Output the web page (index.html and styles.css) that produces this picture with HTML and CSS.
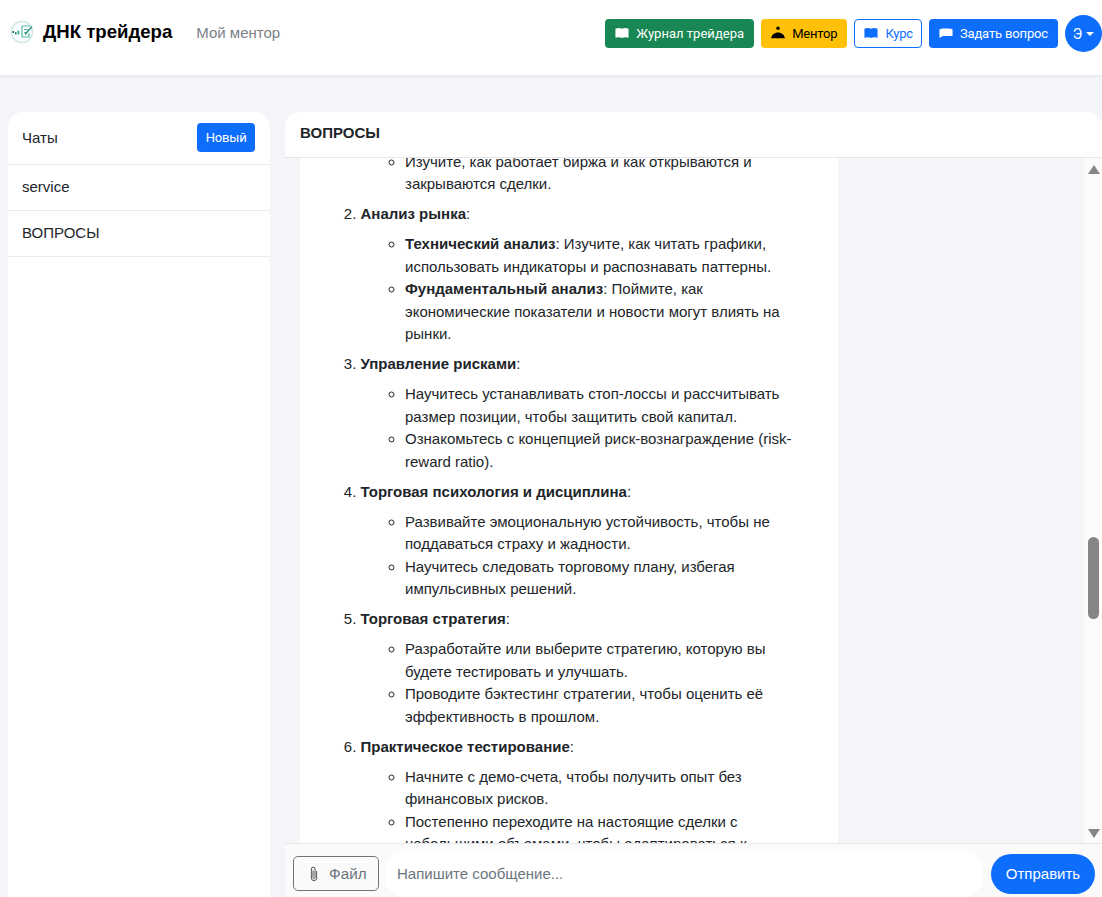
FILE: index.html
```html
<!DOCTYPE html>
<html lang="ru">
<head>
    <meta charset="UTF-8">
    <title>ДНК трейдера</title>
    <link rel="stylesheet" href="styles.css">
</head>
<body>
    <header class="topbar">
        <div class="brand">
            <svg class="logo" viewBox="0 0 24 24" width="24" height="24">
                <circle cx="12" cy="12" r="10.5" fill="#fff" stroke="#cfe9e6" stroke-width="1.5"></circle>
                <rect x="2.500" y="11" width="1.500" height="2" fill="#1c5f6a"></rect>
                <rect x="5" y="12" width="1.500" height="2.500" fill="#2a8a80"></rect>
                <rect x="7.500" y="10.500" width="1.800" height="4" fill="#35b58f"></rect>
                <path d="M12 6h8M12 6v11h7v-4M14 9.500h4M14 12.500h2" fill="none" stroke="#57b8a8" stroke-width="1.200"></path>
                <path d="M15 14.500l7-8" fill="none" stroke="#2a8a80" stroke-width="1.300"></path>
            </svg>
            <span class="brand-name">ДНК трейдера</span>
            <a class="brand-link">Мой ментор</a>
        </div>
        <nav class="actions">
            <a class="btn btn-green">
                <svg class="ico" viewBox="0 0 16 16"><path d="M.5 3C3 2 6 2 8 3.200 10 2 13 2 15.500 3v10.500c-2.500-.8-5.500-.8-7.500.3-2-1.100-5-1.100-7.500-.3z" fill="currentColor"></path></svg>
                Журнал трейдера
            </a>
            <a class="btn btn-yellow">
                <svg class="ico" viewBox="0 0 16 16"><circle cx="8" cy="2.500" r="2" fill="currentColor"></circle><path d="M0 14c1-4 4-6.500 8-6.500s7 2.500 8 6.500z" fill="currentColor"></path></svg>
                Ментор
            </a>
            <a class="btn btn-outline">
                <svg class="ico" viewBox="0 0 16 16"><path d="M.5 3C3 2 6 2 8 3.200 10 2 13 2 15.500 3v10.500c-2.500-.8-5.500-.8-7.500.3-2-1.100-5-1.100-7.500-.3z" fill="#0d6efd"></path></svg>
                Курс
            </a>
            <a class="btn btn-blue btn-ask">
                <svg class="ico" viewBox="0 0 16 16"><path d="M1.500 3.500C5 2.800 11 2.800 14.500 3.500a1 1 0 0 1 1 1v6a1 1 0 0 1-1 1H4.500L1 13.500a.5.500 0 0 1-.5-.5V4.500a1 1 0 0 1 1-1z" fill="currentColor"></path></svg>
                Задать вопрос
            </a>
            <a class="avatar">Э<span class="caret"></span></a>
        </nav>
    </header>

    <main class="layout">
        <aside class="sidebar">
            <div class="side-head">
                <span>Чаты</span>
                <a class="btn btn-blue btn-new">Новый</a>
            </div>
            <div class="side-item">service</div>
            <div class="side-item">ВОПРОСЫ</div>
        </aside>

        <section class="chat">
            <div class="chat-title">ВОПРОСЫ</div>
            <div class="messages">
                <div class="bubble">
                    <ol class="steps" start="1">
                        <li class="step-cut">
                            <ul>
                                <li>Изучите, как работает биржа и как открываются и закрываются сделки.</li>
                            </ul>
                        </li>
                        <li><strong>Анализ рынка</strong>:
                            <ul>
                                <li><strong>Технический анализ</strong>: Изучите, как читать графики, использовать индикаторы и распознавать паттерны.</li>
                                <li><strong>Фундаментальный анализ</strong>: Поймите, как экономические показатели и новости могут влиять на рынки.</li>
                            </ul>
                        </li>
                        <li><strong>Управление рисками</strong>:
                            <ul>
                                <li>Научитесь устанавливать стоп-лоссы и рассчитывать размер позиции, чтобы защитить свой капитал.</li>
                                <li>Ознакомьтесь с концепцией риск-вознаграждение (risk-reward ratio).</li>
                            </ul>
                        </li>
                        <li><strong>Торговая психология и дисциплина</strong>:
                            <ul>
                                <li>Развивайте эмоциональную устойчивость, чтобы не поддаваться страху и жадности.</li>
                                <li>Научитесь следовать торговому плану, избегая импульсивных решений.</li>
                            </ul>
                        </li>
                        <li><strong>Торговая стратегия</strong>:
                            <ul>
                                <li>Разработайте или выберите стратегию, которую вы будете тестировать и улучшать.</li>
                                <li>Проводите бэктестинг стратегии, чтобы оценить её эффективность в прошлом.</li>
                            </ul>
                        </li>
                        <li><strong>Практическое тестирование</strong>:
                            <ul>
                                <li>Начните с демо-счета, чтобы получить опыт без финансовых рисков.</li>
                                <li>Постепенно переходите на настоящие сделки с небольшими объемами, чтобы адаптироваться к реальным условиям.</li>
                            </ul>
                        </li>
                    </ol>
                </div>
                <div class="scrollbar">
                    <span class="arrow-up"></span>
                    <span class="thumb"></span>
                    <span class="arrow-down"></span>
                </div>
            </div>
            <form class="composer">
                <label class="file-btn">
                    <svg class="clip" viewBox="0 0 8 16" width="8" height="16"><path d="M3 4.500v7a1 1 0 0 0 2 0V3a1.800 1.800 0 0 0-3.600 0v9a2.600 2.600 0 0 0 5.200 0V5" fill="none" stroke="#555" stroke-width="1"></path></svg>
                    Файл
                </label>
                <input class="msg-input" type="text" placeholder="Напишите сообщение...">
                <button class="send" type="button">Отправить</button>
            </form>
        </section>
    </main>
</body>
</html>
```

FILE: styles.css
```css
* {
    box-sizing: border-box;
}

html, body {
    height: 100%;
}

body {
    margin: 0;
    overflow: hidden;
    font-family: "Liberation Sans", Arial, sans-serif;
    font-size: 15px;
    color: #212529;
    background-color: #f3f5f9;
}

/* верхняя панель */
.topbar {
    height: 75px;
    display: flex;
    justify-content: space-between;
    align-items: flex-start;
    padding: 15px 0 0 10px;
    background-color: #ffffff;
    box-shadow: 0 1px 4px rgba(0, 0, 0, 0.08);
}

.brand {
    display: flex;
    align-items: center;
    height: 34px;
}

.logo {
    margin-right: 9px;
}

.brand-name {
    font-size: 18.6px;
    font-weight: bold;
    color: #000000;
}

.brand-link {
    margin-left: 24px;
    font-size: 15px;
    color: #7b8087;
}

.actions {
    display: flex;
    align-items: center;
    gap: 7px;
    height: 37px;
}

.btn {
    display: flex;
    align-items: center;
    height: 29px;
    padding: 0 9px 1px;
    gap: 7px;
    font-family: Roboto, "Liberation Sans", sans-serif;
    font-size: 13px;
    font-weight: 450;
    border-radius: 4px;
    border: 1px solid transparent;
}

.ico {
    width: 14px;
    height: 14px;
    flex-shrink: 0;
}

.btn-green {
    background-color: #198754;
    color: #ffffff;
    letter-spacing: 0.03px;
}

.btn-yellow {
    background-color: #ffc107;
    color: #000000;
    letter-spacing: -0.2px;
}

.btn-outline {
    padding-right: 8px;
    border-color: #0d6efd;
    background-color: #ffffff;
    color: #0d6efd;
    font-weight: 400;
    letter-spacing: -0.2px;
}

.btn-blue {
    background-color: #0d6efd;
    color: #ffffff;
}

.btn-ask {
    letter-spacing: -0.15px;
}

.avatar {
    display: flex;
    align-items: center;
    justify-content: center;
    gap: 4px;
    width: 37px;
    height: 37px;
    border-radius: 50%;
    background-color: #0d6efd;
    color: #ffffff;
    font-family: Roboto, "Liberation Sans", sans-serif;
    font-size: 14px;
}

.caret {
    width: 0;
    height: 0;
    border-left: 4px solid transparent;
    border-right: 4px solid transparent;
    border-top: 4px solid #ffffff;
}

/* основная часть */
.layout {
    display: flex;
    gap: 15px;
    height: calc(100vh - 75px);
    padding: 37px 0 0 8px;
}

.sidebar {
    width: 262px;
    flex-shrink: 0;
    background-color: #ffffff;
    border-radius: 15px 15px 0 0;
}

.side-head {
    display: flex;
    justify-content: space-between;
    align-items: center;
    height: 53px;
    padding: 0 15px 2px 14px;
    border-bottom: 1px solid #e9ebee;
}

.btn-new {
    padding: 0 7.5px;
    letter-spacing: -0.2px;
}

.side-item {
    display: flex;
    align-items: center;
    height: 46px;
    padding: 0 0 2px 14px;
    border-bottom: 1px solid #e9ebee;
}

.chat {
    flex: 1;
    min-width: 0;
    display: flex;
    flex-direction: column;
}

.chat-title {
    height: 46px;
    padding: 12px 15px 0;
    flex-shrink: 0;
    font-size: 15px;
    font-weight: bold;
    background-color: #ffffff;
    border-radius: 15px 15px 0 0;
    border-bottom: 1px solid #e4e6ea;
}

.messages {
    position: relative;
    flex: 1;
    min-height: 0;
    overflow: hidden;
    padding-left: 15px;
}

.bubble {
    width: 538px;
    margin-top: -7.5px;
    padding: 0 45px 0 0;
    background-color: #ffffff;
    line-height: 22.5px;
}

.steps {
    margin: 0;
    padding-left: 60.5px;
}

.steps > li {
    margin-bottom: 7.5px;
}

.step-cut {
    list-style: none;
}

.steps ul {
    margin: 7.5px 0 0;
    padding-left: 44.5px;
    list-style-type: circle;
}

.step-cut ul {
    margin-top: 0;
}

/* полоса прокрутки */
.scrollbar {
    position: absolute;
    top: 0;
    right: 0;
    bottom: 0;
    width: 18px;
    background-color: #fbfbfb;
}

.arrow-up, .arrow-down, .thumb {
    position: absolute;
    left: 4px;
}

.arrow-up {
    top: 7px;
    border-left: 6px solid transparent;
    border-right: 6px solid transparent;
    border-bottom: 9px solid #858585;
}

.arrow-down {
    bottom: 5px;
    border-left: 6px solid transparent;
    border-right: 6px solid transparent;
    border-top: 9px solid #858585;
}

.thumb {
    top: 379px;
    width: 11px;
    height: 82px;
    border-radius: 6px;
    background-color: #858585;
}

/* поле сообщения */
.composer {
    display: flex;
    align-items: center;
    height: 54px;
    flex-shrink: 0;
    gap: 6px;
    padding: 6px 7px 0 8px;
    background-color: #fafafb;
    border-top: 1px solid #e4e6ea;
}

.file-btn {
    display: flex;
    align-items: center;
    gap: 11px;
    width: 86px;
    height: 35px;
    flex-shrink: 0;
    padding-left: 16px;
    border: 1px solid #6c757d;
    border-radius: 5px;
    color: #6c757d;
    font-size: 15.3px;
}

.msg-input {
    flex: 1;
    min-width: 0;
    height: 46px;
    margin-right: 2px;
    padding: 0 12px;
    border: none;
    border-radius: 20px;
    outline: none;
    font-family: inherit;
    font-size: 15px;
    background-color: #ffffff;
}

.msg-input::placeholder {
    color: #6c757d;
}

.send {
    width: 104px;
    height: 40px;
    flex-shrink: 0;
    border: none;
    border-radius: 20px;
    background-color: #0d6efd;
    color: #ffffff;
    font-family: inherit;
    font-size: 15px;
}
```
